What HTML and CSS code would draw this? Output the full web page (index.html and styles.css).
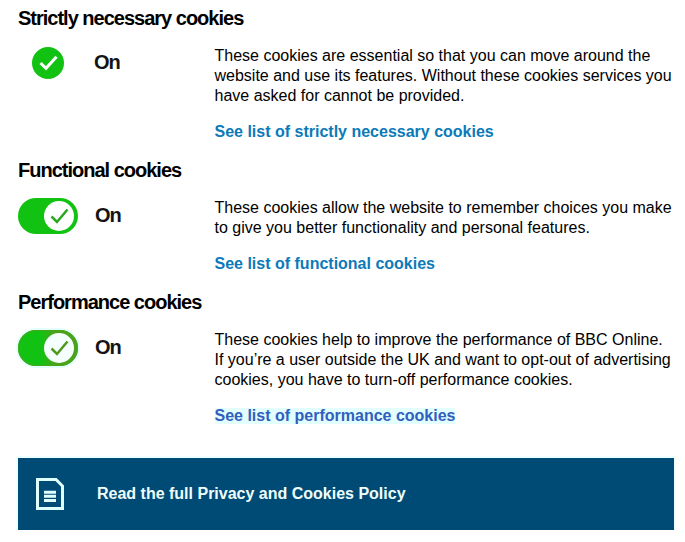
FILE: index.html
```html
<!DOCTYPE html>
<html lang="en">

<head>
    <meta charset="UTF-8">
    <meta name="viewport" content="width=device-width, initial-scale=1.0">
    <title>Cookie settings</title>
    <link rel="stylesheet" href="styles.css">
</head>

<body>
    <div class="cookies">
        <div class="item">
            <h2>Strictly necessary cookies</h2>
            <div class="row">
                <div class="state fixed">
                    <div class="tick">
                        <svg width="32" height="32" viewBox="0 0 32 32"><path d="M8.500 16l5.500 5.300L24.500 9.700"/></svg>
                    </div>
                    <span>On</span>
                </div>
                <div class="text">
                    <p>These cookies are essential so that you can move around the<br>website and use its features. Without these cookies services you<br>have asked for cannot be provided.</p>
                    <a href="#">See list of strictly necessary cookies</a>
                </div>
            </div>
        </div>
        <div class="item">
            <h2>Functional cookies</h2>
            <div class="row">
                <div class="state">
                    <div class="switch">
                        <svg width="30" height="30" viewBox="0 0 30 30"><path d="M7.500 15.500l5.500 5.500L23.500 8.500"/></svg>
                    </div>
                    <span>On</span>
                </div>
                <div class="text">
                    <p>These cookies allow the website to remember choices you make<br>to give you better functionality and personal features.</p>
                    <a href="#">See list of functional cookies</a>
                </div>
            </div>
        </div>
        <div class="item">
            <h2>Performance cookies</h2>
            <div class="row">
                <div class="state">
                    <div class="switch active">
                        <svg width="30" height="30" viewBox="0 0 30 30"><path d="M7.500 15.500l5.500 5.500L23.500 8.500"/></svg>
                    </div>
                    <span>On</span>
                </div>
                <div class="text">
                    <p>These cookies help to improve the performance of BBC Online.<br>If you’re a user outside the UK and want to opt-out of advertising<br>cookies, you have to turn-off performance cookies.</p>
                    <a href="#" class="active">See list of performance cookies</a>
                </div>
            </div>
        </div>
        <a href="#" class="policy">
            <svg width="28" height="32" viewBox="0 0 28 32"><path d="M1.500 1.500H20L26.500 8V30.500H1.500zM8 14.300H20M8 18.300H20M8 22.500H20"/></svg>
            <span>Read the full Privacy and Cookies Policy</span>
        </a>
    </div>
</body>

</html>
```
FILE: styles.css
```css
* {
    margin: 0;
    padding: 0;
    box-sizing: border-box;
}

body {
    background-color: #fff;
    font-family: "Liberation Sans", Arial, sans-serif;
    font-size: 16px;
    line-height: 20px;
    color: #000;
}

.cookies {
    width: 656px;
    margin-left: 18px;
    padding-top: 6px;
}

.item {
    padding-bottom: 16px;
}

h2 {
    font-size: 20px;
    line-height: 24px;
    letter-spacing: -1px;
}

.row {
    display: flex;
    padding-top: 16px;
}

.state {
    display: flex;
    width: 197px;
    height: 36px;
    align-items: center;
    font-size: 20px;
    font-weight: bold;
    letter-spacing: -1px;
    color: #141414;
}

.state span {
    margin-left: 17px;
    padding-bottom: 2px;
}

.fixed {
    height: 34px;
    padding-left: 14px;
}

.fixed span {
    margin-left: 30px;
}

.tick {
    width: 32px;
    height: 32px;
    border-radius: 50%;
    background-color: #12c212;
}

.switch {
    width: 60px;
    height: 36px;
    padding: 3px 4px 3px 26px;
    border-radius: 18px;
    background-color: #12c212;
}

.switch svg {
    border-radius: 50%;
    background-color: #fff;
}

.switch.active {
    background: linear-gradient(to right, #12c212 40%, #4ba31c 60%);
    box-shadow: inset 0 0 0 1px #4ba31c, 0 0 0 2px #e2fffb;
}

svg {
    display: block;
}

path {
    fill: none;
    stroke: #fff;
    stroke-width: 3;
}

.switch path {
    stroke: #27a81e;
    stroke-width: 2.5;
}

.switch.active path {
    stroke: #4f981e;
}

.switch.active svg {
    background-color: #f5fffd;
}

.text {
    margin-left: -0.5px;
    white-space: nowrap;
}

.text a {
    display: block;
    width: fit-content;
    margin-top: 16px;
    font-weight: bold;
    color: #0b7ab9;
    text-decoration: none;
}

.text .active {
    color: #315fbd;
    background: linear-gradient(#fff 2px, #e2feff 2px, #e2feff 18px, #fff 18px);
}

.policy {
    display: flex;
    align-items: center;
    height: 72px;
    margin-top: 16px;
    padding-left: 18px;
    background-color: #004a76;
    box-shadow: 0 0 0 2px #edffff;
    font-weight: bold;
    color: #effffc;
    text-decoration: none;
}

.policy path {
    stroke: #dffffc;
}

.policy span {
    margin-left: 33px;
}
```
